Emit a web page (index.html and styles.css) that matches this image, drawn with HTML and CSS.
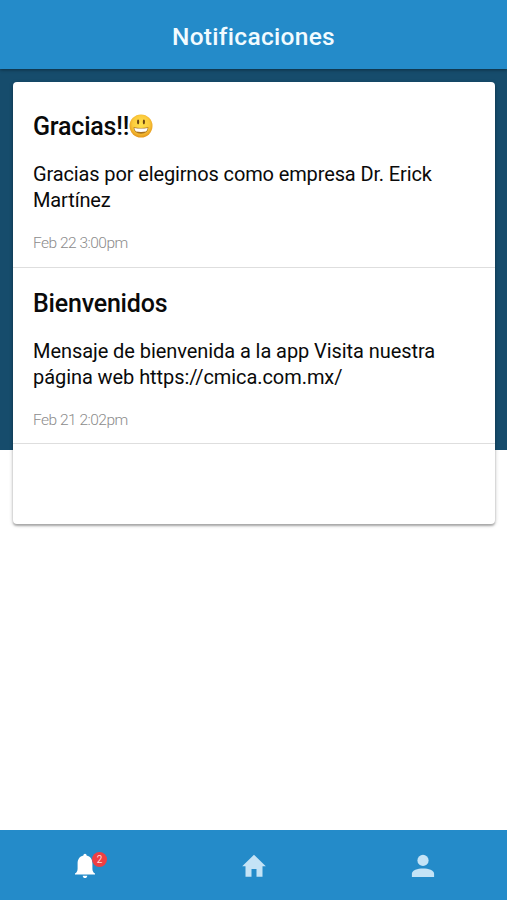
FILE: index.html
```
<!DOCTYPE html>
<html lang="es">
<head>
<meta charset="utf-8">
<title>Notificaciones</title>
<link rel="stylesheet" href="styles.css">
</head>
<body>
<header class="header"><h1>Notificaciones</h1></header>
<main class="content">
  <section class="card">
    <article class="item">
      <h2><span>Gracias!!</span><svg class="emoji" viewBox="0 0 24 24" role="img" aria-label="😃">
        <defs>
          <radialGradient id="face" cx="50%" cy="42%" r="56%">
            <stop offset="0" stop-color="#ffe24d"/><stop offset=".65" stop-color="#fccb3c"/><stop offset="1" stop-color="#e59a1f"/>
          </radialGradient>
        </defs>
        <circle cx="12" cy="12" r="11.5" fill="url(#face)"/>
        <ellipse cx="9.1" cy="8" rx="1.1" ry="2.4" fill="#6b4514"/>
        <ellipse cx="14.900" cy="8" rx="1.1" ry="2.4" fill="#6b4514"/>
        <path d="M4.500 13.200Q12 14.600 19.500 13.200Q19 19.700 12 19.700Q5 19.700 4.500 13.200Z" fill="#a8701c"/>
        <path d="M5.300 14Q12 15.200 18.700 14Q18.300 16.800 17 17.500Q12 18.300 7 17.500Q5.700 16.800 5.300 14Z" fill="#fff"/>
      </svg></h2>
      <p>Gracias por elegirnos como empresa Dr. Erick Martínez</p>
      <time>Feb 22 3:00pm</time>
    </article>
    <article class="item">
      <h2><span>Bienvenidos</span></h2>
      <p class="wide">Mensaje de bienvenida a la app Visita nuestra página web https://cmica.com.mx/</p>
      <time>Feb 21 2:02pm</time>
    </article>
  </section>
</main>
<nav class="tabs">
  <a class="tab active">
    <span class="bell">
      <svg width="22" height="26" viewBox="0 0 22 26"><path d="M11 .8c1 0 1.500.8 1.600 1.800C16.500 3.500 18.400 6.500 18.400 10.500V15.500c0 2.500.8 4 2.600 5.100v.9H1v-.9c1.800-1.100 2.600-2.600 2.600-5.100V10.500C3.600 6.500 5.500 3.500 9.400 2.600 9.500 1.600 10 .8 11 .8ZM8.700 22.700h4.600c-.2 1.500-1.100 2.300-2.300 2.300s-2.100-.8-2.300-2.300Z"/></svg>
      <span class="badge">2</span>
    </span>
  </a>
  <a class="tab"><svg width="24" height="24" viewBox="0 0 24 24"><path d="M12 .8 23.800 12.200H20.500V22.800H14.500V15H9.500v7.800H3.500V12.200H.2Z"/></svg></a>
  <a class="tab"><svg width="24" height="24" viewBox="0 0 24 24"><circle cx="12" cy="6.400" r="5.600"/><path d="M.9 22.900V19.700C.9 16 6.500 14.400 12 14.400s11.100 1.600 11.100 5.300v3.200Z"/></svg></a>
</nav>
</body>
</html>
```
FILE: styles.css
```
* { box-sizing: border-box; }
body {
  margin: 0;
  height: 900px;
  display: flex;
  flex-direction: column;
  background: #fff;
  font-family: Roboto, sans-serif;
  color: #0a0a0a;
  overflow: hidden;
}
.header {
  height: 69px;
  padding-top: 3px;
  display: flex;
  align-items: center;
  justify-content: center;
  background: #248bc9;
  box-shadow: 0 1px 3px rgba(0, 0, 0, .4);
  z-index: 1;
}
h1 {
  margin: 0;
  font-size: 24.500px;
  font-weight: 500;
  letter-spacing: .3px;
  color: #f2fbff;
}
.content {
  flex: 1;
  padding: 13px 12px 0 13px;
  background: linear-gradient(#164c6c 381px, #fff 381px);
}
.card {
  height: 442px;
  background: #fff;
  border-radius: 4px;
  box-shadow: 0 2px 2px rgba(0, 0, 0, .24), 0 1px 4px rgba(0, 0, 0, .22);
}
.item {
  height: 177px;
  padding: 28px 20px 0;
  border-bottom: 1px solid #dedede;
}
.item:first-child { height: 186px; padding-top: 29px; }
.item:last-child { padding-top: 20px; height: 176px; }
h2 {
  margin: 0;
  height: 32px;
  display: flex;
  align-items: center;
  font-size: 25px;
  font-weight: 500;
  line-height: 32px;
  letter-spacing: -.2px;
}
.emoji { width: 24px; height: 24px; margin-top: -2px; }
p {
  margin: 18px 0 0;
  font-size: 20px;
  line-height: 26.200px;
  letter-spacing: -.13px;
}
.wide { letter-spacing: -.07px; }
time {
  display: block;
  margin-top: 20px;
  font-size: 15.500px;
  font-weight: 300;
  line-height: 20px;
  letter-spacing: -.5px;
  color: #8b8b8b;
}
.tabs {
  height: 70px;
  display: grid;
  grid-template-columns: repeat(3, 1fr);
  background: #248bc9;
}
.tab {
  display: flex;
  align-items: center;
  justify-content: center;
  padding-top: 2px;
  fill: #c4e3f6;
}
.active { fill: #fff; }
.tab svg { display: block; }
.bell { position: relative; }
.badge {
  position: absolute;
  left: 18.500px;
  top: -1px;
  width: 15px;
  height: 15px;
  border-radius: 50%;
  background: #ee3f43;
  color: #ffdcdc;
  font-size: 10px;
  line-height: 16px;
  text-align: center;
}
```
